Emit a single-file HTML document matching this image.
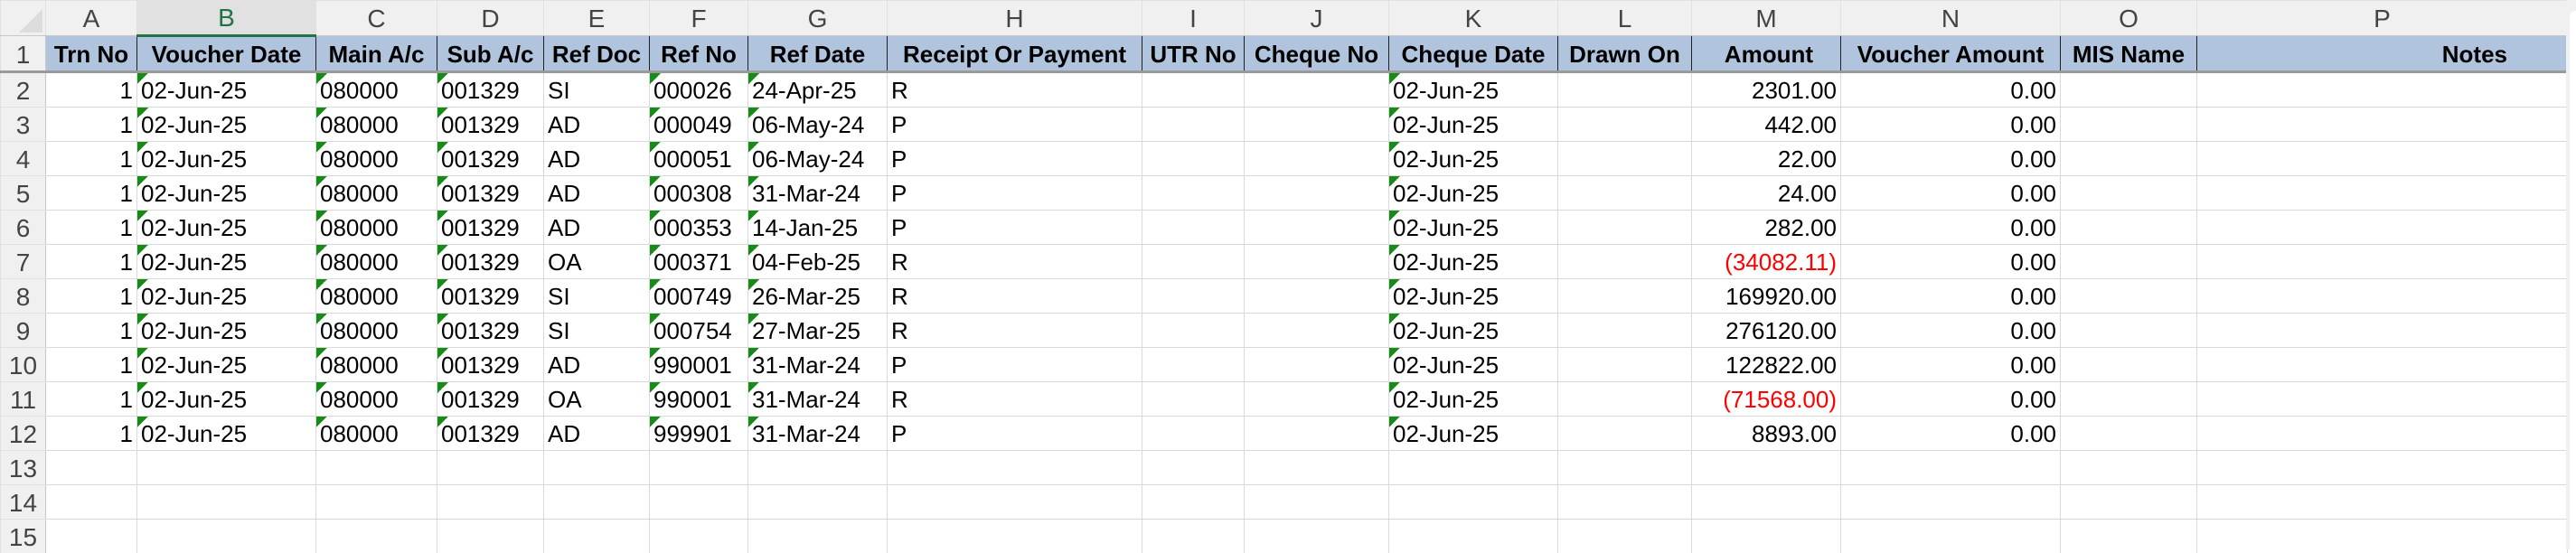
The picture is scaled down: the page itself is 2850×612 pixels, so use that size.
<!DOCTYPE html>
<html><head><meta charset="utf-8"><style>
html,body{margin:0;padding:0;background:#fff;width:2850px;height:608px;overflow:hidden}
table{border-collapse:collapse;table-layout:fixed;width:2840px;font-family:"Liberation Sans Narrow","Liberation Sans",sans-serif;font-size:26px;color:#000}
td{border:1px solid #d9d9d9;padding:2px 4px 0 4px;height:35px;white-space:nowrap;overflow:hidden;line-height:35px}
tr.ch td{background:#f0f0f0;color:#444;text-align:center;height:37px;padding:0 4px;border:1px solid #e0e0e0;border-bottom:1px solid #c8c8c8;font-size:28px;line-height:37px}
tr.ch td.sel{background:#e1e1e1;color:#217346;border-bottom:3px solid #217346;height:35px}
tr.h td{background:#b0c4de;font-weight:bold;text-align:center;border-left:1px solid #222;border-right:1px solid #222;border-top:1px solid #c8c8c8;border-bottom:3px solid #9a9a9a;height:33px}
td.rh{background:#f0f0f0;color:#444;text-align:center;border-color:#e0e0e0;border-right:1px solid #c8c8c8;font-size:28px}
tr.h td.rh{background:#f0f0f0;font-weight:normal;border-left:1px solid #e0e0e0;border-right:1px solid #c8c8c8}
.r,tr.h td.r{text-align:right}
.t{background:linear-gradient(135deg,#188a18 50%,transparent 50%) 0 0/12px 12px no-repeat}
.neg{color:#ff0000}
.corner{position:relative}
.corner:after{content:"";position:absolute;right:3px;bottom:3px;border-left:26px solid transparent;border-bottom:26px solid #dcdcdc}
.edge{position:absolute;left:2839px;top:0;width:11px;height:608px;background:#f0f0f0}
.edge:after{content:"";position:absolute;left:4px;top:12px;width:20px;height:600px;background:#fff;border-radius:6px 0 0 0}
</style></head><body>
<div class="edge"></div>
<table>
<colgroup><col style="width:50px"><col style="width:101px"><col style="width:198px"><col style="width:134px"><col style="width:118px"><col style="width:117px"><col style="width:109px"><col style="width:154px"><col style="width:282px"><col style="width:113px"><col style="width:160px"><col style="width:187px"><col style="width:148px"><col style="width:165px"><col style="width:243px"><col style="width:151px"><col style="width:410px"></colgroup>
<tr class="ch"><td class="corner"></td><td>A</td><td class="sel">B</td><td>C</td><td>D</td><td>E</td><td>F</td><td>G</td><td>H</td><td>I</td><td>J</td><td>K</td><td>L</td><td>M</td><td>N</td><td>O</td><td>P</td></tr>
<tr class="h"><td class="rh">1</td><td>Trn No</td><td>Voucher Date</td><td>Main A/c</td><td>Sub A/c</td><td>Ref Doc</td><td>Ref No</td><td>Ref Date</td><td>Receipt Or Payment</td><td>UTR No</td><td>Cheque No</td><td>Cheque Date</td><td>Drawn On</td><td class="r" style="padding-right:30px">Amount</td><td>Voucher Amount</td><td>MIS Name</td><td class="r" style="padding-right:66px">Notes</td></tr>
<tr><td class="rh">2</td><td class="r">1</td><td class="t">02-Jun-25</td><td class="t">080000</td><td class="t">001329</td><td>SI</td><td class="t">000026</td><td class="t">24-Apr-25</td><td>R</td><td></td><td></td><td class="t">02-Jun-25</td><td></td><td class="r">2301.00</td><td class="r">0.00</td><td></td><td></td></tr>
<tr><td class="rh">3</td><td class="r">1</td><td class="t">02-Jun-25</td><td class="t">080000</td><td class="t">001329</td><td>AD</td><td class="t">000049</td><td class="t">06-May-24</td><td>P</td><td></td><td></td><td class="t">02-Jun-25</td><td></td><td class="r">442.00</td><td class="r">0.00</td><td></td><td></td></tr>
<tr><td class="rh">4</td><td class="r">1</td><td class="t">02-Jun-25</td><td class="t">080000</td><td class="t">001329</td><td>AD</td><td class="t">000051</td><td class="t">06-May-24</td><td>P</td><td></td><td></td><td class="t">02-Jun-25</td><td></td><td class="r">22.00</td><td class="r">0.00</td><td></td><td></td></tr>
<tr><td class="rh">5</td><td class="r">1</td><td class="t">02-Jun-25</td><td class="t">080000</td><td class="t">001329</td><td>AD</td><td class="t">000308</td><td class="t">31-Mar-24</td><td>P</td><td></td><td></td><td class="t">02-Jun-25</td><td></td><td class="r">24.00</td><td class="r">0.00</td><td></td><td></td></tr>
<tr><td class="rh">6</td><td class="r">1</td><td class="t">02-Jun-25</td><td class="t">080000</td><td class="t">001329</td><td>AD</td><td class="t">000353</td><td class="t">14-Jan-25</td><td>P</td><td></td><td></td><td class="t">02-Jun-25</td><td></td><td class="r">282.00</td><td class="r">0.00</td><td></td><td></td></tr>
<tr><td class="rh">7</td><td class="r">1</td><td class="t">02-Jun-25</td><td class="t">080000</td><td class="t">001329</td><td>OA</td><td class="t">000371</td><td class="t">04-Feb-25</td><td>R</td><td></td><td></td><td class="t">02-Jun-25</td><td></td><td class="r neg">(34082.11)</td><td class="r">0.00</td><td></td><td></td></tr>
<tr><td class="rh">8</td><td class="r">1</td><td class="t">02-Jun-25</td><td class="t">080000</td><td class="t">001329</td><td>SI</td><td class="t">000749</td><td class="t">26-Mar-25</td><td>R</td><td></td><td></td><td class="t">02-Jun-25</td><td></td><td class="r">169920.00</td><td class="r">0.00</td><td></td><td></td></tr>
<tr><td class="rh">9</td><td class="r">1</td><td class="t">02-Jun-25</td><td class="t">080000</td><td class="t">001329</td><td>SI</td><td class="t">000754</td><td class="t">27-Mar-25</td><td>R</td><td></td><td></td><td class="t">02-Jun-25</td><td></td><td class="r">276120.00</td><td class="r">0.00</td><td></td><td></td></tr>
<tr><td class="rh">10</td><td class="r">1</td><td class="t">02-Jun-25</td><td class="t">080000</td><td class="t">001329</td><td>AD</td><td class="t">990001</td><td class="t">31-Mar-24</td><td>P</td><td></td><td></td><td class="t">02-Jun-25</td><td></td><td class="r">122822.00</td><td class="r">0.00</td><td></td><td></td></tr>
<tr><td class="rh">11</td><td class="r">1</td><td class="t">02-Jun-25</td><td class="t">080000</td><td class="t">001329</td><td>OA</td><td class="t">990001</td><td class="t">31-Mar-24</td><td>R</td><td></td><td></td><td class="t">02-Jun-25</td><td></td><td class="r neg">(71568.00)</td><td class="r">0.00</td><td></td><td></td></tr>
<tr><td class="rh">12</td><td class="r">1</td><td class="t">02-Jun-25</td><td class="t">080000</td><td class="t">001329</td><td>AD</td><td class="t">999901</td><td class="t">31-Mar-24</td><td>P</td><td></td><td></td><td class="t">02-Jun-25</td><td></td><td class="r">8893.00</td><td class="r">0.00</td><td></td><td></td></tr>
<tr><td class="rh">13</td><td></td><td></td><td></td><td></td><td></td><td></td><td></td><td></td><td></td><td></td><td></td><td></td><td></td><td></td><td></td><td></td></tr>
<tr><td class="rh">14</td><td></td><td></td><td></td><td></td><td></td><td></td><td></td><td></td><td></td><td></td><td></td><td></td><td></td><td></td><td></td><td></td></tr>
<tr><td class="rh">15</td><td></td><td></td><td></td><td></td><td></td><td></td><td></td><td></td><td></td><td></td><td></td><td></td><td></td><td></td><td></td><td></td></tr>
</table>
</body></html>
